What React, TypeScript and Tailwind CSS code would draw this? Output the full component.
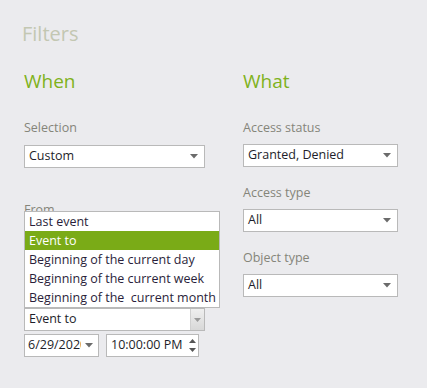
const font = { fontFamily: '"Open Sans", "Noto Sans", sans-serif' };

function Caret() {
  return (
    <svg width="8" height="5" viewBox="0 0 8 5" className="shrink-0">
      <path d="M0 0h8L4 4.5z" fill="#6b6b6b" />
    </svg>
  );
}

function Select({ value, className = "" }: { value: string; className?: string }) {
  return (
    <div
      className={`flex h-[23px] items-center justify-between border border-[#b9b9b9] bg-white pl-[4px] pr-[6px] text-[12.5px] text-[#1e1e2a] ${className}`}
    >
      <span>{value}</span>
      <Caret />
    </div>
  );
}

function Label({ children, className = "" }: { children: React.ReactNode; className?: string }) {
  return <div className={`text-[12.5px] leading-[16px] text-[#85857a] ${className}`}>{children}</div>;
}

const options = [
  "Last event",
  "Event to",
  "Beginning of the current day",
  "Beginning of the current week",
  "Beginning of the  current month",
];

export default function App() {
  return (
    <div style={font} className="h-[388px] w-[427px] overflow-hidden bg-[#ebebee] pl-[22px] pt-[21px]">
      <h1 className="text-[20px] leading-[26px] text-[#c3c7b2]">Filters</h1>
      <div className="mt-[22px] flex">
        <div className="w-[221px] pl-[2px]">
          <h2 className="text-[19px] leading-[24px] text-[#7fb21b]">When</h2>
          <Label className="mt-[27px]">Selection</Label>
          <Select value="Custom" className="mt-[9px] w-[181px]" />
          <Label className="mt-[34px]">From</Label>
          <div className="relative mt-[90px] w-[181px]">
            <ul className="absolute bottom-full left-0 w-[196px] whitespace-pre border border-[#b9b9b9] bg-white text-[12.5px] text-[#2a1e3a]">
              {options.map((o, i) => (
                <li
                  key={o}
                  className={`h-[19px] pl-[4px] leading-[19px] ${i === 1 ? "bg-[#7aab17] text-white" : ""}`}
                >
                  {o}
                </li>
              ))}
            </ul>
            <div className="flex h-[23px] items-stretch border border-[#b9b9b9] bg-white text-[12.5px] text-[#1e1e2a]">
              <span className="flex flex-1 items-center pl-[4px]">Event to</span>
              <span className="flex w-[14px] items-center justify-center border-l border-[#d0d0d0] bg-gradient-to-b from-[#efefef] to-[#d8d8d8]">
                <svg width="7" height="4" viewBox="0 0 7 4">
                  <path d="M0 0h7L3.5 4z" fill="#9a9a9a" />
                </svg>
              </span>
            </div>
          </div>
          <div className="mt-[3px] flex gap-[7px]">
            <div className="flex h-[23px] w-[75px] items-center justify-between overflow-hidden border border-[#b9b9b9] bg-white pl-[3px] pr-[5px] text-[12.5px] text-[#1e1e2a]">
              <span className="w-[53px] overflow-hidden whitespace-nowrap">6/29/2020</span>
              <Caret />
            </div>
            <div className="flex h-[23px] w-[93px] items-center justify-between border border-[#b9b9b9] bg-white pl-[4px] pr-[2px] text-[12.5px] text-[#1e1e2a]">
              <span>10:00:00 PM</span>
              <span className="flex flex-col gap-[5px]">
                <svg width="7" height="4" viewBox="0 0 7 4">
                  <path d="M0 4h7L3.5 0z" fill="#555" />
                </svg>
                <svg width="7" height="4" viewBox="0 0 7 4">
                  <path d="M0 0h7L3.5 4z" fill="#555" />
                </svg>
              </span>
            </div>
          </div>
        </div>
        <div className="w-[155px]">
          <h2 className="text-[19px] leading-[24px] text-[#7fb21b]">What</h2>
          <Label className="mt-[27px]">Access status</Label>
          <Select value="Granted, Denied" className="mt-[8px]" />
          <Label className="mt-[18px]">Access type</Label>
          <Select value="All" className="mt-[8px]" />
          <Label className="mt-[18px]">Object type</Label>
          <Select value="All" className="mt-[8px]" />
        </div>
      </div>
    </div>
  );
}
